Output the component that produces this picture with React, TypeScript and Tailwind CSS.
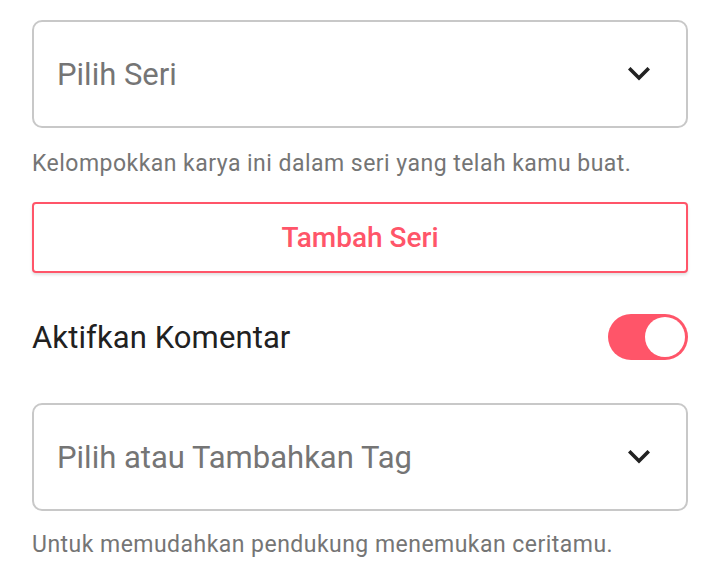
import React from "react";

function Chevron() {
  return (
    <svg width="22" height="14" viewBox="0 0 22 14" className="block">
      <polyline
        points="2.5,2.5 11,11 19.5,2.5"
        fill="none"
        stroke="#222222"
        strokeWidth="3.6"
        strokeLinecap="square"
        strokeLinejoin="miter"
      />
    </svg>
  );
}

function Select({ label }: { label: string }) {
  return (
    <div className="h-[108px] border-2 border-[#c8c8c8] rounded-[10px] flex items-center justify-between pl-[23px] pr-[36px] bg-white">
      <span className="text-[31px] text-[#757575] leading-none">{label}</span>
      <Chevron />
    </div>
  );
}

export default function App() {
  return (
    <div
      className="w-[720px] h-[576px] bg-white px-[32px] pt-[20px] overflow-hidden"
      style={{ fontFamily: "Roboto, 'Noto Sans', sans-serif" }}
    >
      <Select label="Pilih Seri" />
      <p className="mt-[22px] text-[23px] leading-[28px] text-[#757575] tracking-[0.47px]">
        Kelompokkan karya ini dalam seri yang telah kamu buat.
      </p>
      <button className="mt-[24px] w-full h-[71px] border-2 border-[#ff5569] rounded-[4px] bg-white flex items-center justify-center shadow-[0_2px_3px_rgba(0,0,0,0.12)]">
        <span className="text-[28px] font-medium text-[#ff5569] leading-none">Tambah Seri</span>
      </button>
      <div className="mt-[41px] h-[46px] flex items-center justify-between">
        <span className="text-[31px] text-[#212121] leading-none tracking-[0.1px]">Aktifkan Komentar</span>
        <div className="w-[80px] h-[46px] rounded-full bg-[#ff5569] flex items-center justify-end pr-[3px]">
          <div className="w-[40px] h-[40px] rounded-full bg-white" />
        </div>
      </div>
      <div className="mt-[43px]">
        <Select label="Pilih atau Tambahkan Tag" />
      </div>
      <p className="mt-[20px] text-[23px] leading-[28px] text-[#757575] tracking-[0.47px]">
        Untuk memudahkan pendukung menemukan ceritamu.
      </p>
    </div>
  );
}
